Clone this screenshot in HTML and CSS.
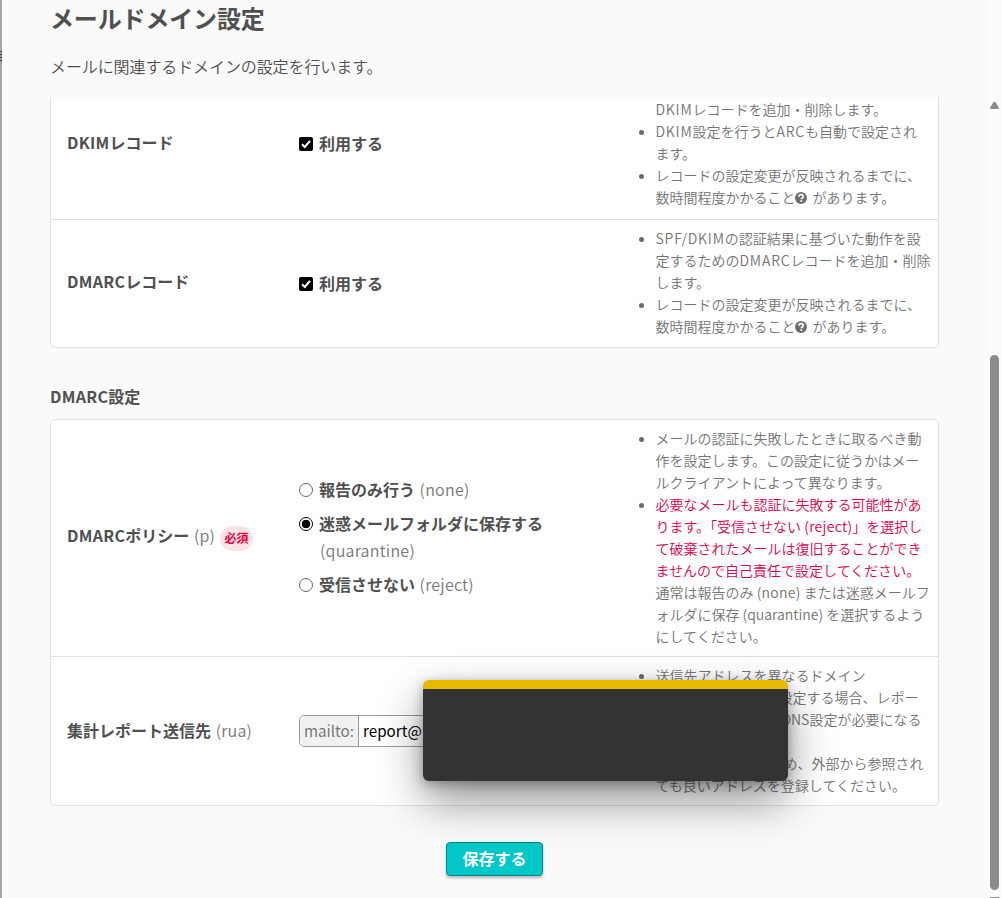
FILE: index.html
```html
<!DOCTYPE html>
<html lang="ja">
<head>
<meta charset="utf-8">
<title>メールドメイン設定</title>
<link rel="stylesheet" href="styles.css">
</head>
<body>
<svg class="defs" aria-hidden="true"><symbol id="help" viewBox="0 0 12 12"><circle cx="6" cy="6" r="6" fill="#6c6c6c"/><path d="M3.900 4.700C4 3.200 5 2.700 6.100 2.700c1.200 0 2.100.7 2.100 1.800 0 1.500-1.900 1.400-1.900 2.700" fill="none" stroke="#fff" stroke-width="1.700"/><rect x="5.400" y="8.200" width="1.800" height="1.700" fill="#fff"/></symbol></svg>
<div class="app">
  <aside class="edge"></aside>
  <main class="main">
    <h1 class="title">メールドメイン設定</h1>
    <p class="lead">メールに関連するドメインの設定を行います。</p>
    <div class="scroll">
      <section class="card card-cut">
        <div class="row row-dkim">
          <div class="label"><span class="caps">DKIM</span>レコード</div>
          <div class="control"><label class="opt"><i class="check"><svg viewBox="0 0 14 14"><path d="M3 7.300 5.800 10 11 3.800"/></svg></i><b>利用する</b></label></div>
          <ul class="notes">
            <li class="nomark"><span class="caps">DKIM</span>レコードを追加・削除します。</li>
            <li><span class="caps">DKIM</span>設定を行うと<span class="caps">ARC</span>も自動で設定され<br>ます。</li>
            <li>レコードの設定変更が反映されるまでに、<br>数時間程度かかること<svg class="help"><use href="#help"/></svg> があります。</li>
          </ul>
        </div>
        <div class="row row-dmarc">
          <div class="label"><span class="caps">DMARC</span>レコード</div>
          <div class="control"><label class="opt"><i class="check"><svg viewBox="0 0 14 14"><path d="M3 7.300 5.800 10 11 3.800"/></svg></i><b>利用する</b></label></div>
          <ul class="notes">
            <li><span class="caps">SPF/DKIM</span>の認証結果に基づいた動作を設<br>定するための<span class="caps">DMARC</span>レコードを追加・削除<br>します。</li>
            <li>レコードの設定変更が反映されるまでに、<br>数時間程度かかること<svg class="help"><use href="#help"/></svg> があります。</li>
          </ul>
        </div>
      </section>
      <h2 class="subtitle"><span class="caps">DMARC</span>設定</h2>
      <section class="card">
        <div class="row">
          <div class="label"><span class="caps">DMARC</span>ポリシー <span class="sub">(p)</span><span class="badge">必須</span></div>
          <div class="control radios">
            <label class="opt"><i class="radio"></i><span><b>報告のみ行う</b> <span class="sub">(none)</span></span></label>
            <label class="opt"><i class="radio on"></i><span><b>迷惑メールフォルダに保存する</b><br><span class="sub">(quarantine)</span></span></label>
            <label class="opt"><i class="radio"></i><span><b>受信させない</b> <span class="sub">(reject)</span></span></label>
          </div>
          <ul class="notes">
            <li>メールの認証に失敗したときに取るべき動<br>作を設定します。この設定に従うかはメー<br>ルクライアントによって異なります。</li>
            <li><span class="warn">必要なメールも認証に失敗する可能性があ<br>ります。「受信させない <span class="lat">(reject)</span>」を選択し<br>て破棄されたメールは復旧することができ<br>ませんので自己責任で設定してください。</span><br>通常は報告のみ <span class="lat">(none)</span> または迷惑メールフ<br>ォルダに保存 (quarantine) を選択するよう<br>にしてください。</li>
          </ul>
        </div>
        <div class="row">
          <div class="label">集計レポート送信先 <span class="sub">(rua)</span></div>
          <div class="control"><div class="field"><span class="prefix">mailto:</span><span class="value">report@</span></div></div>
          <ul class="notes">
            <li>送信先アドレスを異なるドメイン<br><span class="tail tail-a">設定する場合、レポー</span><br><span class="tail tail-b">DNS設定が必要になる</span><br>&nbsp;</li>
            <li><span class="tail tail-c">め、外部から参照され</span><br>ても良いアドレスを登録してください。</li>
          </ul>
        </div>
      </section>
      <button class="save">保存する</button>
    </div>
  </main>
  <div class="bar"><i class="arrow"></i><i class="thumb"></i><i class="down"></i></div>
</div>
<div class="popup"></div>
</body>
</html>
```
FILE: styles.css
```css
* { box-sizing: border-box; }
body { margin: 0; width: 1002px; height: 898px; overflow: hidden; background: #fafafa; color: #505050; font-family: "Noto Sans CJK JP", sans-serif; font-size: 16px; }
.defs { position: absolute; width: 0; height: 0; }
.app { display: flex; height: 898px; }
.edge { width: 2px; flex: none; background: repeating-linear-gradient(#444 0 1px, #999 1px 3px) 0 51px / 2px 12px no-repeat, #a6a6a6; }
.main { width: 985px; flex: none; padding-left: 48px; }
.title { margin: 0; padding-top: 1px; font-size: 24px; line-height: 34px; font-weight: 600; letter-spacing: -.15px; white-space: nowrap; }
.lead { margin: 19px 0 0; line-height: 24px; font-weight: 350; letter-spacing: -.1px; }
.scroll { margin-top: 19px; height: 801px; overflow: hidden; }
.card { width: 889px; background: #fff; border: 1px solid #e1e1e1; border-radius: 5px; }
.card-cut { border-top: 0; border-radius: 0 0 5px 5px; }
.row { display: grid; grid-template-columns: 232px 342px 1fr; align-items: center; padding: 7px 0 9px 16px; }
.row + .row { border-top: 1px solid #e1e1e1; }
.row-dkim { padding: 1px 0 11px 16px; }
.row-dmarc { padding-bottom: 10px; }
.label { font-weight: 600; white-space: nowrap; line-height: 24px; }
.row-dkim .label { margin-bottom: 22px; }
.row-dkim .control { margin-bottom: 20px; }
.row-dmarc .label { margin-bottom: 2px; }
.row-dmarc .control { margin-top: 2px; }
b { font-weight: 600; }
.caps { letter-spacing: .3px; }
.notes .caps { letter-spacing: .8px; }
.lat { letter-spacing: .3px; }
.sub { font-weight: 350; color: #777; letter-spacing: .25px; margin-left: 1px; }
.badge { display: inline-block; margin-left: 5px; width: 33px; height: 25px; border-radius: 13px; background: #fde3e5; color: #e60046; font-size: 12px; line-height: 24px; text-align: center; vertical-align: -1px; }
.opt { display: flex; align-items: flex-start; gap: 6px; line-height: 27px; white-space: nowrap; }
.check { width: 14px; height: 14px; margin-top: 7px; border-radius: 2px; background: #000; flex: none; }
.check svg { display: block; fill: none; stroke: #fff; stroke-width: 2; }
.radios { display: grid; gap: 7px; }
.radio { width: 14px; height: 14px; margin-top: 7px; border: 1px solid #666; border-radius: 50%; background: #fff; flex: none; }
.radio.on { border-color: #000; background: radial-gradient(circle, #000 4px, #fff 4.600px); }
.notes { margin: 0; padding: 0 0 0 14.500px; font-size: 14px; line-height: 22px; font-weight: 350; color: #747474; white-space: nowrap; list-style: none; }
.notes li::before { content: ""; float: left; width: 5px; height: 5px; margin: 10px 0 0 -17px; border-radius: 50%; background: #6c6c6c; }
.notes .nomark::before { display: none; }
.help { width: 12px; height: 12px; margin: 0 2.500px 0 -.5px; vertical-align: -1px; }
.warn { color: #e1004f; }
.tail-a { padding-left: 123px; }
.tail-b { padding-left: 126px; }
.tail-c { padding-left: 128px; }
.subtitle { margin: 36px 0 11px; font-size: 16px; line-height: 24px; font-weight: 600; }
.field { display: flex; width: 280px; height: 32px; margin-top: 2px; border: 1px solid #999; border-radius: 5px; line-height: 28px; font-size: 15.200px; overflow: hidden; }
.prefix { width: 59px; padding-left: 4px; background: #f1f1f1; border-right: 1px solid #999; color: #777; }
.value { padding-left: 4px; color: #000; }
.save { display: block; margin: 36px 0 0 396px; width: 97px; height: 34px; padding: 0 0 2px; border: 1px solid #008a8a; border-radius: 4px; background: #00c8c8; color: #fff; font: 700 16px/28px "Noto Sans CJK JP", sans-serif; box-shadow: 0 2px 3px #0004; }
.bar { width: 15px; background: #fcfcfc; padding: 102px 0 0 3px; flex: none; }
.arrow { display: block; width: 9px; height: 7px; background: #8b8b8b; clip-path: polygon(38% 0, 62% 0, 100% 86%, 94% 100%, 6% 100%, 0 86%); }
.thumb { display: block; margin-top: 246px; width: 9px; height: 535px; border-radius: 5px; background: #8b8b8b; }
.down { display: block; margin-top: 7px; width: 9px; height: 1px; background: #8b8b8b; }
.popup { position: absolute; left: 423px; top: 680px; width: 365px; height: 101px; border-top: 9px solid #e7b900; border-radius: 6px; background: #333; box-shadow: 0 20px 45px rgba(0,0,0,.42), 0 3px 12px rgba(0,0,0,.3); }
```
